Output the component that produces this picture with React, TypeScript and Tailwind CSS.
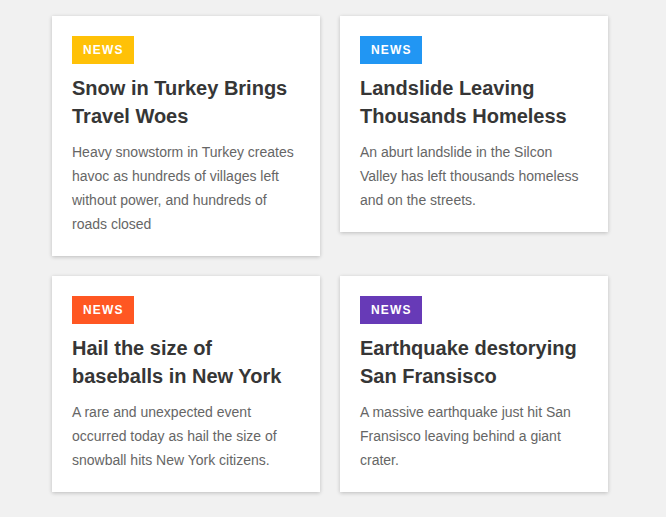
import React from 'react';

interface NewsItem {
  badge: string;
  title: string;
  body: string;
}

const items: NewsItem[] = [
  {
    badge: 'bg-[#ffc107]',
    title: 'Snow in Turkey Brings Travel Woes',
    body: 'Heavy snowstorm in Turkey creates havoc as hundreds of villages left without power, and hundreds of roads closed',
  },
  {
    badge: 'bg-[#2196f3]',
    title: 'Landslide Leaving Thousands Homeless',
    body: 'An aburt landslide in the Silcon Valley has left thousands homeless and on the streets.',
  },
  {
    badge: 'bg-[#ff5722]',
    title: 'Hail the size of baseballs in New York',
    body: 'A rare and unexpected event occurred today as hail the size of snowball hits New York citizens.',
  },
  {
    badge: 'bg-[#673ab7]',
    title: 'Earthquake destorying San Fransisco',
    body: 'A massive earthquake just hit San Fransisco leaving behind a giant crater.',
  },
];

const NewsCard: React.FC<{ item: NewsItem }> = ({ item }) => (
  <div className="bg-white p-5 shadow-[0_1px_4px_rgba(0,0,0,0.22)]">
    {/* Tag */}
    <span
      className={`inline-block ${item.badge} h-7 pl-[11px] pr-[10px] text-[12px] leading-7 font-bold tracking-[1.2px] text-white`}
    >
      NEWS
    </span>
    <h3 className="mt-[10px] text-[20px] leading-7 font-bold text-[#363636]">{item.title}</h3>
    <p className="mt-[10px] text-[14px] leading-6 text-[#666666]">{item.body}</p>
  </div>
);

export default function App() {
  return (
    <div
      className="min-h-[517px] w-full bg-[#f1f1f1] pl-[52px] pt-4"
      style={{ fontFamily: '"Liberation Sans", Arial, sans-serif' }}
    >
      <div className="grid w-[556px] grid-cols-[268px_268px] items-start gap-5">
        {items.map((item) => (
          <NewsCard key={item.title} item={item} />
        ))}
      </div>
    </div>
  );
}
